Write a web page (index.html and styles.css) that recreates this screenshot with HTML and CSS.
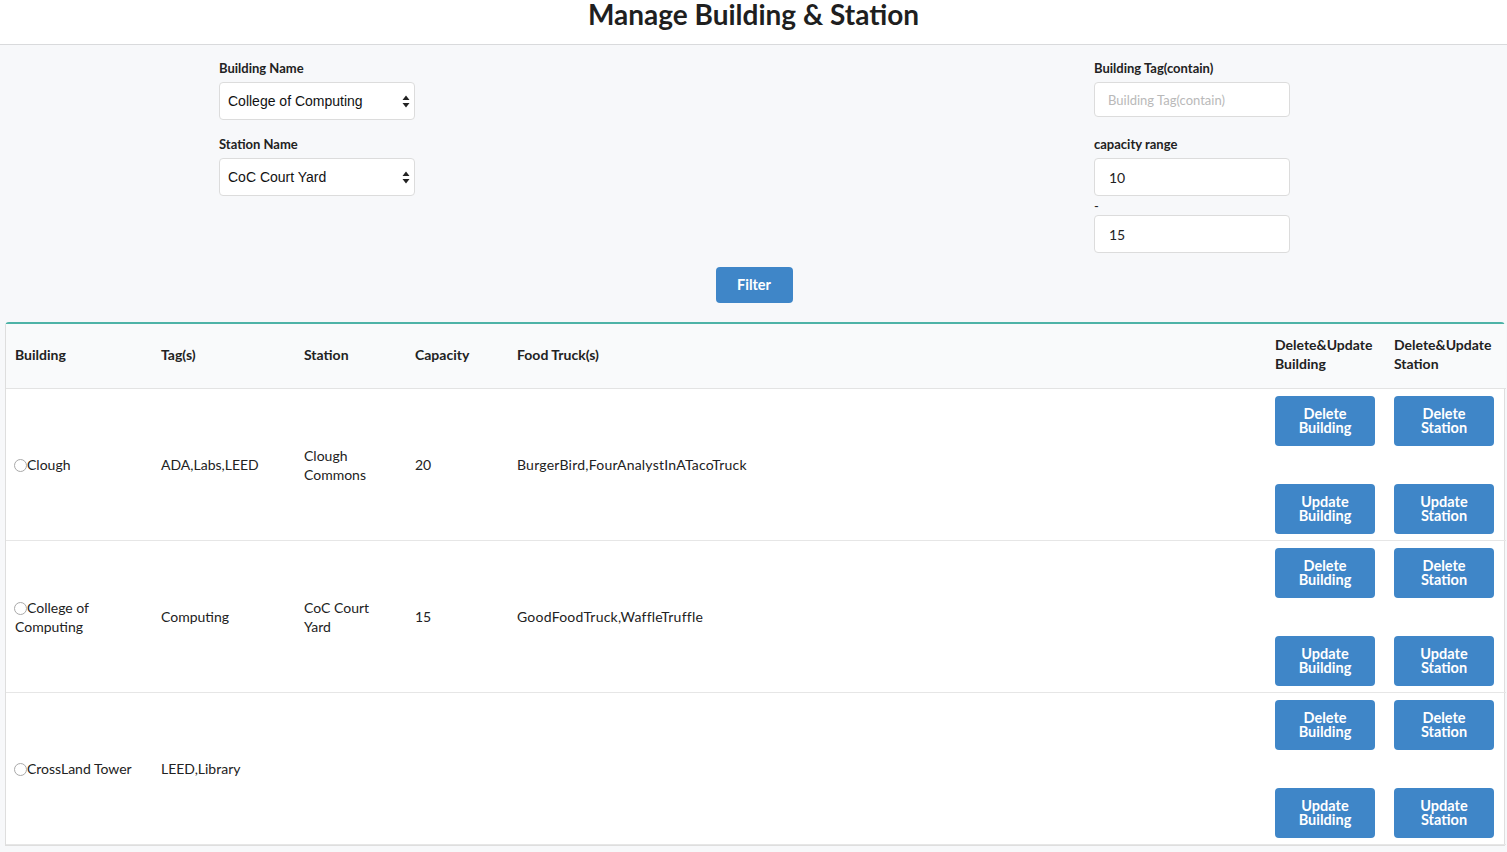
FILE: index.html
```html
<!DOCTYPE html>
<html>
<head>
<meta charset="utf-8">
<link rel="stylesheet" href="styles.css">
</head>
<body>
<header class="topbar"><h1 class="title">Manage Building &amp; Station</h1></header>
<main class="page">
  <section class="filters">
    <div class="col">
      <label class="lbl">Building Name</label>
      <div class="select"><span>College of Computing</span><svg class="arrows" width="8" height="13" viewBox="0 0 8 13"><path d="M4 0.5 L7.5 5 H0.5 Z M4 12.5 L7.5 8 H0.5 Z" fill="#222"/></svg></div>
      <label class="lbl gap">Station Name</label>
      <div class="select"><span>CoC Court Yard</span><svg class="arrows" width="8" height="13" viewBox="0 0 8 13"><path d="M4 0.5 L7.5 5 H0.5 Z M4 12.5 L7.5 8 H0.5 Z" fill="#222"/></svg></div>
    </div>
    <div class="col">
      <label class="lbl">Building Tag(contain)</label>
      <div class="input short placeholder">Building Tag(contain)</div>
      <label class="lbl gap gap-r">capacity range</label>
      <div class="input">10</div>
      <div class="dash">-</div>
      <div class="input">15</div>
    </div>
  </section>
  <div class="filter-row"><button class="btn filter">Filter</button></div>
  <div class="card">
    <table class="tbl">
      <colgroup>
        <col style="width:146px"><col style="width:143px"><col style="width:111px"><col style="width:102px"><col style="width:758px"><col style="width:119px"><col style="width:121px">
      </colgroup>
      <thead>
        <tr><th>Building</th><th>Tag(s)</th><th>Station</th><th>Capacity</th><th>Food Truck(s)</th><th>Delete&amp;Update Building</th><th>Delete&amp;Update Station</th></tr>
      </thead>
      <tbody>
        <tr>
          <td><span class="radio"></span>Clough</td><td>ADA,Labs,LEED</td><td>Clough Commons</td><td>20</td><td class="wide">BurgerBird,FourAnalystInATacoTruck</td>
          <td><div class="acts"><button class="btn">Delete Building</button><button class="btn">Update Building</button></div></td>
          <td><div class="acts"><button class="btn">Delete Station</button><button class="btn">Update Station</button></div></td>
        </tr>
        <tr>
          <td><span class="radio"></span>College of Computing</td><td>Computing</td><td>CoC Court Yard</td><td>15</td><td class="wide">GoodFoodTruck,WaffleTruffle</td>
          <td><div class="acts"><button class="btn">Delete Building</button><button class="btn">Update Building</button></div></td>
          <td><div class="acts"><button class="btn">Delete Station</button><button class="btn">Update Station</button></div></td>
        </tr>
        <tr>
          <td><span class="radio"></span>CrossLand Tower</td><td>LEED,Library</td><td></td><td></td><td></td>
          <td><div class="acts"><button class="btn">Delete Building</button><button class="btn">Update Building</button></div></td>
          <td><div class="acts"><button class="btn">Delete Station</button><button class="btn">Update Station</button></div></td>
        </tr>
      </tbody>
    </table>
  </div>
</main>
</body>
</html>
```

FILE: styles.css
```css
* { box-sizing: border-box; }
html, body { margin: 0; padding: 0; }
body {
  font-family: Lato, "Open Sans", sans-serif;
  color: #222;
  background: #f7f8fa;
  font-size: 14px;
}
.topbar {
  background: #fff;
  height: 45px;
  border-bottom: 1px solid #d9dadc;
  text-align: center;
  overflow: hidden;
}
.title {
  margin: 0;
  font-size: 28px;
  line-height: 29px;
  font-weight: 700;
  color: #1f1f1f;
}
.page { padding-top: 15px; }
.filters {
  display: flex;
  justify-content: space-between;
  padding: 0 217px 0 219px;
}
.col { width: 196px; display: flex; flex-direction: column; }
.lbl {
  font-weight: 700;
  font-size: 13px;
  line-height: 16px;
  margin-bottom: 6px;
  color: #222;
}
.lbl.gap { margin-top: 16px; }
.lbl.gap-r { margin-top: 19px; }
.select {
  height: 38px;
  background: #fff;
  border: 1px solid #dcdcdc;
  border-radius: 4px;
  display: flex;
  align-items: center;
  justify-content: space-between;
  padding: 0 4px 0 8px;
  font-family: "Liberation Sans", Arial, sans-serif;
  font-size: 14px;
  color: #111;
}
.input {
  height: 38px;
  background: #fff;
  border: 1px solid #dcdcdc;
  border-radius: 4px;
  display: flex;
  align-items: center;
  padding: 0 14px;
  font-size: 14px;
  color: #222;
}
.input.short { height: 35px; padding-left: 13px; }
.placeholder { color: #b9b9b9; font-size: 13px; }
.dash { height: 19px; line-height: 16px; font-size: 13px; padding-top: 2px; }
.filter-row { display: flex; justify-content: center; padding: 14px 0 19px 1px; }
.btn {
  background: #3f86c8;
  color: #fff;
  border: none;
  border-radius: 4px;
  font-family: Lato, sans-serif;
  font-weight: 700;
  font-size: 14.5px;
  line-height: 14px;
  cursor: pointer;
}
.filter { width: 77px; height: 36px; }
.card {
  margin: 0 2px 0 5px;
  border: 1px solid #dedede;
  border-top: 2px solid #4eb3a7;
  border-radius: 4px 4px 0 0;
  background: #fff;
}
.tbl {
  width: 100%;
  table-layout: fixed;
  border-collapse: collapse;
}
.tbl th {
  background: #f9fafb;
  text-align: left;
  font-weight: 700;
  font-size: 14px;
  line-height: 19px;
  padding: 11px 10px 14px 9px;
  height: 64px;
  border-bottom: 1px solid #e3e3e3;
  color: #222;
}
.tbl td {
  padding: 7px 10px 6px 9px;
  line-height: 19px;
  font-size: 14px;
  border-bottom: 1px solid #e6e6e6;
  vertical-align: middle;
}
.tbl td.wide { letter-spacing: 0.22px; }
.tbl th:first-child, .tbl td:first-child { padding-left: 9px; }
.radio {
  display: inline-block;
  width: 13px;
  height: 13px;
  border: 1px solid #a9a9a9;
  border-radius: 50%;
  vertical-align: -2px;
  background: #fff;
  margin-left: -1px;
}
.acts { display: flex; flex-direction: column; gap: 38px; }
.acts .btn { width: 100px; height: 50px; }
```
